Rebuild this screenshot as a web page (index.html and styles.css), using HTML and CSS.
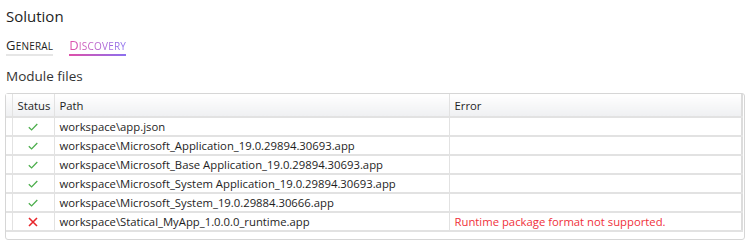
FILE: index.html
```html
<!DOCTYPE html>
<html lang="en">
<head>
    <meta charset="UTF-8">
    <title>Solution</title>
    <link rel="stylesheet" href="styles.css">
</head>
<body>

<h1 class="page_title">Solution</h1>

<div class="tabs">
    <span class="tab">General</span>
    <span class="tab tab_active">Discovery</span>
</div>

<h2 class="section_title">Module files</h2>

<div class="grid_box">
    <table class="grid">
        <colgroup>
            <col class="col_gutter">
            <col class="col_status">
            <col class="col_path">
            <col class="col_error">
        </colgroup>
        <thead>
            <tr>
                <th></th>
                <th>Status</th>
                <th>Path</th>
                <th>Error</th>
            </tr>
        </thead>
        <tbody>
            <tr>
                <td></td>
                <td class="status"><svg class="icon_ok" viewBox="0 0 10 8"><polyline points="0.8,4.2 3.6,6.9 9.3,1"/></svg></td>
                <td>workspace\app.json</td>
                <td></td>
            </tr>
            <tr>
                <td></td>
                <td class="status"><svg class="icon_ok" viewBox="0 0 10 8"><polyline points="0.8,4.2 3.6,6.9 9.3,1"/></svg></td>
                <td>workspace\Microsoft_Application_19.0.29894.30693.app</td>
                <td></td>
            </tr>
            <tr>
                <td></td>
                <td class="status"><svg class="icon_ok" viewBox="0 0 10 8"><polyline points="0.8,4.2 3.6,6.9 9.3,1"/></svg></td>
                <td>workspace\Microsoft_Base Application_19.0.29894.30693.app</td>
                <td></td>
            </tr>
            <tr>
                <td></td>
                <td class="status"><svg class="icon_ok" viewBox="0 0 10 8"><polyline points="0.8,4.2 3.6,6.9 9.3,1"/></svg></td>
                <td>workspace\Microsoft_System Application_19.0.29894.30693.app</td>
                <td></td>
            </tr>
            <tr>
                <td></td>
                <td class="status"><svg class="icon_ok" viewBox="0 0 10 8"><polyline points="0.8,4.2 3.6,6.9 9.3,1"/></svg></td>
                <td>workspace\Microsoft_System_19.0.29884.30666.app</td>
                <td></td>
            </tr>
            <tr>
                <td></td>
                <td class="status"><svg class="icon_fail" viewBox="0 0 10 10"><path d="M1,1 L9,9 M9,1 L1,9"/></svg></td>
                <td>workspace\Statical_MyApp_1.0.0.0_runtime.app</td>
                <td class="error_text">Runtime package format not supported.</td>
            </tr>
        </tbody>
    </table>
</div>

</body>
</html>
```

FILE: styles.css
```css
body {
    margin: 0;
    padding: 0 6px 0 5px;
    font-family: "Open Sans", sans-serif;
    color: #1e1e1e;
    background: white;
}

.page_title {
    margin: 4px 0 0 1px;
    font-size: 15px;
    font-weight: normal;
    line-height: 24px;
}

.tabs {
    display: flex;
    gap: 16px;
    margin: 9px 0 0 1px;
}

.tab {
    display: inline-block;
    font-size: 10px;
    text-transform: uppercase;
    line-height: 16px;
    letter-spacing: 0.2px;
    border-bottom: 2px solid #e6e6e6;
}

.tab::first-letter {
    font-size: 13px;
}

.tab_active {
    color: #c850c0;
    background: linear-gradient(90deg, #e050a8, #8a70f0);
    -webkit-background-clip: text;
    background-clip: text;
    -webkit-text-fill-color: transparent;
    border-image: linear-gradient(90deg, #e050a8, #8a70f0) 1;
}

.section_title {
    margin: 10px 0 0 1px;
    font-size: 13.5px;
    font-weight: normal;
    line-height: 20px;
    color: #333;
}

.grid_box {
    margin-top: 7px;
    border: 1px solid #d6d6d6;
    border-radius: 3px;
    padding: 0 2px 7px 0;
}

.grid {
    width: 737px;
    border-collapse: collapse;
    table-layout: fixed;
    font-size: 11.3px;
}

.col_gutter { width: 6px; }
.col_status { width: 42px; }
.col_path { width: 395px; }

.grid th {
    height: 22px;
    padding: 0 5px;
    text-align: left;
    font-weight: normal;
    background: linear-gradient(#ffffff, #eff0f2);
    border-bottom: 2px solid #e2e2e2;
    border-right: 1px solid #e2e2e2;
}

.grid th:first-child {
    padding: 0;
}

.grid td {
    height: 17px;
    padding: 0 5px;
    border-bottom: 2px solid #e2e2e2;
    border-right: 1px solid #e2e2e2;
    white-space: nowrap;
}

.grid td:first-child {
    padding: 0;
}

.grid th:last-child,
.grid td:last-child {
    border-right: 2px solid #dcdcdc;
}

.status {
    text-align: center;
    line-height: 0;
}

.icon_ok {
    width: 10px;
    height: 8px;
    fill: none;
    stroke: #4cae4c;
    stroke-width: 1.3;
}

.icon_fail {
    width: 10px;
    height: 10px;
    fill: none;
    stroke: #e8262b;
    stroke-width: 1.6;
}

.error_text {
    color: #f0303a;
}
```
